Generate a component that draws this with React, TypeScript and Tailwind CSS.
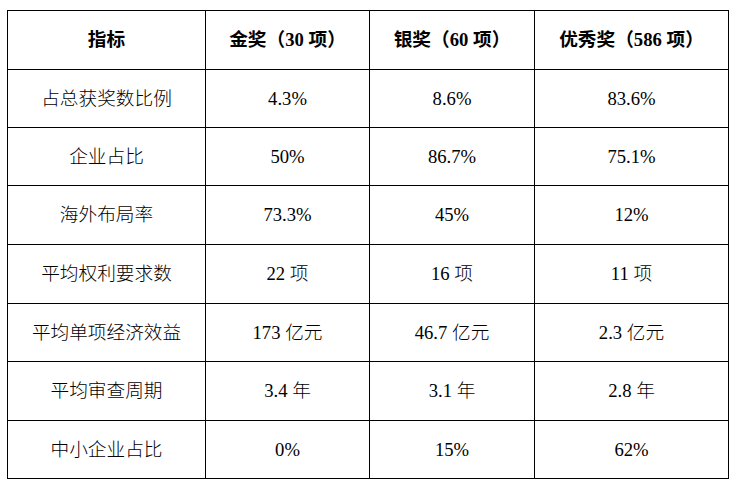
const headers = ["指标", "金奖（30 项）", "银奖（60 项）", "优秀奖（586 项）"];

const rows: string[][] = [
  ["占总获奖数比例", "4.3%", "8.6%", "83.6%"],
  ["企业占比", "50%", "86.7%", "75.1%"],
  ["海外布局率", "73.3%", "45%", "12%"],
  ["平均权利要求数", "22 项", "16 项", "11 项"],
  ["平均单项经济效益", "173 亿元", "46.7 亿元", "2.3 亿元"],
  ["平均审查周期", "3.4 年", "3.1 年", "2.8 年"],
  ["中小企业占比", "0%", "15%", "62%"],
];

const rowHeights = ["h-[58px]", "h-[58px]", "h-[59px]", "h-[59px]", "h-[58px]", "h-[59px]", "h-[58px]"];

export default function App() {
  return (
    <div className="w-[735px] h-[485px] bg-white pt-[10px] pl-[7px] font-['Liberation_Serif','Noto_Sans_CJK_SC',serif] text-[18.67px] text-black">
      <table className="border-collapse table-fixed w-[721px]">
        <colgroup>
          <col className="w-[198px]" />
          <col className="w-[164px]" />
          <col className="w-[165px]" />
          <col className="w-[194px]" />
        </colgroup>
        <thead>
          <tr className="h-[59px]">
            {headers.map((h) => (
              <th key={h} className="border border-black text-center align-middle font-bold p-0">
                {h}
              </th>
            ))}
          </tr>
        </thead>
        <tbody>
          {rows.map((r, i) => (
            <tr key={r[0]} className={rowHeights[i]}>
              {r.map((c, j) => (
                <td key={j} className="border border-black text-center align-middle p-0 font-light">
                  {c}
                </td>
              ))}
            </tr>
          ))}
        </tbody>
      </table>
    </div>
  );
}
